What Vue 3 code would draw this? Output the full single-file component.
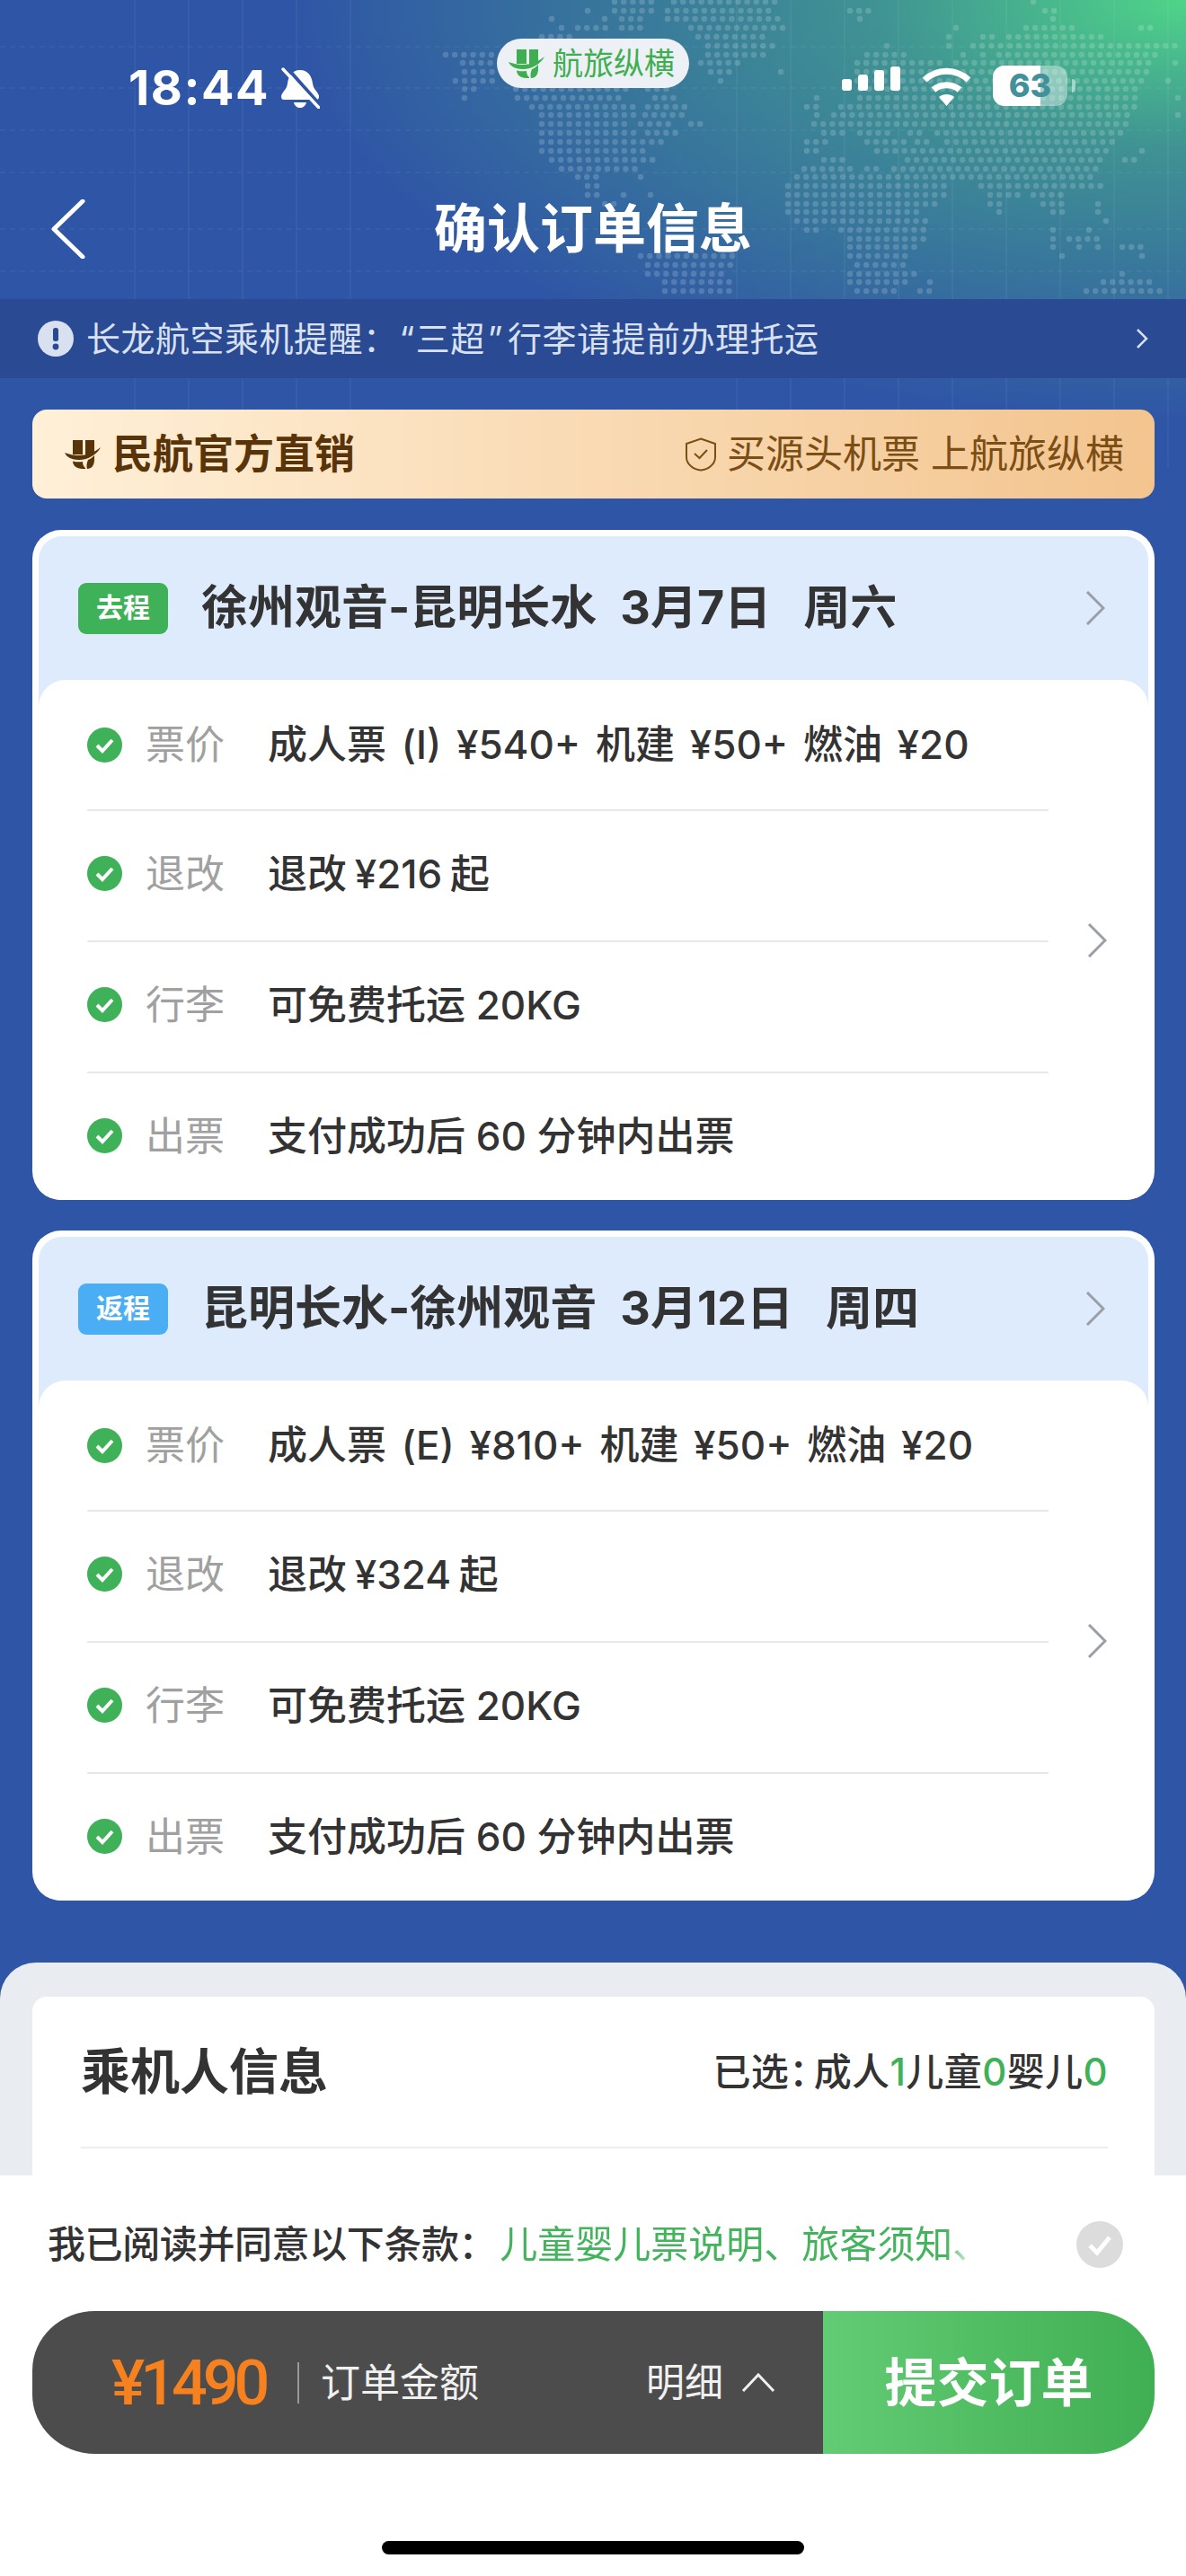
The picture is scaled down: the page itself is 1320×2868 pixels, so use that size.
<script setup>
import { computed } from 'vue'

// logo mark, used in the status pill and in the banner
const markD = 'M9 0h11v16H9zM23 0h10v13l-10 6zM0 14C6 16 9 17 16 17C26 17 34 13 40 8C36 16 26 22 16 22C8 22 2 19 0 14zM9 23.5C13 24.5 17 24.5 20 24C20 27 21 29.5 23 31V32H20C13 32 9 28 9 23.5zM33 17V22C33 28 30 32 25 32C24 29 24.5 26 26 22C29 21 31 19 33 17z'

// continents of the header map: [y, x0, x1, x0, x1, ...]
const mapRows = [
  [2, 684, 732, 750, 871, 1150, 1150],
  [12, 654, 654, 684, 727, 743, 863, 946, 970, 1163, 1174],
  [21, 614, 614, 673, 673, 692, 716, 743, 874, 957, 957, 1172, 1182],
  [31, 625, 625, 643, 676, 692, 716, 769, 874, 1064, 1064, 1142, 1196, 1270, 1290],
  [41, 603, 636, 777, 853, 1056, 1056, 1094, 1105, 1123, 1228],
  [51, 788, 863, 987, 987, 1056, 1056, 1083, 1316],
  [61, 496, 550, 788, 853, 965, 1008, 1072, 1072, 1094, 1094, 1112, 1295],
  [70, 515, 550, 780, 823, 954, 1053, 1064, 1284, 1308, 1308],
  [80, 517, 550, 791, 812, 869, 869, 954, 1064, 1072, 1279],
  [90, 507, 550, 802, 802, 954, 1273, 1300, 1300],
  [99, 517, 531, 574, 697, 721, 748, 957, 1273],
  [109, 517, 517, 576, 697, 729, 756, 909, 909, 957, 1268, 1311, 1311],
  [119, 592, 708, 721, 764, 898, 909, 936, 1263],
  [128, 603, 708, 718, 764, 909, 909, 928, 1263, 1311, 1311],
  [138, 603, 697, 713, 753, 769, 783, 906, 1263],
  [148, 603, 708, 721, 756, 917, 938, 957, 989, 1013, 1032, 1043, 1255],
  [158, 603, 737, 898, 922, 965, 1008, 1021, 1037, 1054, 1244],
  [168, 603, 716, 898, 912, 976, 1233, 1271, 1271],
  [178, 614, 727, 917, 938, 1010, 1230, 1252, 1263],
  [188, 625, 708, 895, 952, 965, 981, 995, 1222],
  [197, 643, 668, 713, 713, 887, 1220],
  [207, 654, 668, 877, 1059, 1092, 1225],
  [217, 654, 668, 694, 694, 724, 724, 877, 1059, 1102, 1137, 1150, 1185],
  [227, 673, 689, 877, 1048, 1102, 1118, 1161, 1185, 1222, 1222],
  [236, 877, 1029, 1112, 1112, 1172, 1185, 1222, 1222],
  [246, 887, 1040, 1231, 1231],
  [256, 898, 909, 936, 1037, 1172, 1172, 1212, 1212],
  [266, 946, 1029, 1172, 1172, 1190, 1222],
  [275, 946, 1019, 1172, 1172, 1201, 1201, 1222, 1222, 1249, 1273],
  [285, 713, 823, 946, 1011, 1182, 1182, 1271, 1281],
  [295, 721, 823, 954, 1011],
  [305, 721, 812, 946, 1019, 1249, 1249],
  [314, 740, 812, 946, 1011, 1035, 1035, 1228, 1284],
  [324, 740, 812, 954, 1000, 1024, 1037, 1209, 1293]
]

const dotPath = computed(() => {
  let d = ''
  for (const [y, ...spans] of mapRows) {
    for (let i = 0; i < spans.length; i += 2) {
      for (let x = spans[i]; x <= spans[i + 1]; x += 10.2) {
        d += `M${x} ${y}h.01`
      }
    }
  }
  return d
})

const gridX = [150, 210, 270, 330, 390, 820, 880, 940, 1000, 1060, 1120, 1180, 1240, 1300]
const gridY = [52, 98, 145, 192, 255, 302]

const trips = [
  {
    tag: '去程',
    tagClass: 'tag-go',
    route: '徐州观音-昆明长水',
    date: '3月7日',
    week: '周六',
    rows: [
      { label: '票价', value: '成人票 (I) ¥540+ 机建 ¥50+ 燃油 ¥20', gap: 5 },
      { label: '退改', value: '退改 ¥216 起', gap: -3 },
      { label: '行李', value: '可免费托运 20KG', gap: 0 },
      { label: '出票', value: '支付成功后 60 分钟内出票', gap: 0 }
    ]
  },
  {
    tag: '返程',
    tagClass: 'tag-back',
    route: '昆明长水-徐州观音',
    date: '3月12日',
    week: '周四',
    rows: [
      { label: '票价', value: '成人票 (E) ¥810+ 机建 ¥50+ 燃油 ¥20', gap: 5 },
      { label: '退改', value: '退改 ¥324 起', gap: -3 },
      { label: '行李', value: '可免费托运 20KG', gap: 0 },
      { label: '出票', value: '支付成功后 60 分钟内出票', gap: 0 }
    ]
  }
]
</script>

<template>
  <div class="page">
    <!-- header artwork -->
    <svg class="hero-art" width="1320" height="520" viewBox="0 0 1320 520">
      <g stroke="#fff" stroke-opacity="0.045" stroke-width="2">
        <line v-for="x in gridX" :key="'x' + x" :x1="x" y1="0" :x2="x" y2="520" />
        <line v-for="y in gridY" :key="'y' + y" x1="0" :y1="y" x2="1320" :y2="y" stroke-dasharray="6 5" />
      </g>
      <path :d="dotPath" stroke="#fff" stroke-opacity="0.17" stroke-width="6.5" stroke-linecap="round" fill="none" />
    </svg>

    <div class="content">
      <div class="status">
        <div class="status-left">
          <span class="time">18:44</span>
          <svg class="bell" width="44" height="46" viewBox="0 0 44 46">
            <path d="M22 3c9 0 13 7 14 15c1 7 6 9 7 14c0 3-1 4-3 4H4c-2 0-3-1-3-4c1-5 6-7 7-14C9 10 13 3 22 3zM15 39h14c-1 4-4 6-7 6s-6-2-7-6z" fill="#fff" />
            <path d="M7 0L46 44" stroke="#2f55a6" stroke-width="4" />
            <path d="M3 2L43 45" stroke="#fff" stroke-width="3.5" stroke-linecap="round" />
          </svg>
        </div>
        <div class="app-pill">
          <svg width="40" height="32" viewBox="0 0 40 32"><path :d="markD" fill="#3fae50" /></svg>
          <span>航旅纵横</span>
        </div>
        <div class="status-right">
          <div class="signal">
            <i style="height: 13px"></i>
            <i style="height: 18px"></i>
            <i style="height: 23px"></i>
            <i style="height: 27px"></i>
          </div>
          <svg class="wifi" width="57" height="44" viewBox="0 0 57 44">
            <path d="M4 15C18 2 39 2 53 15M14 26C22 19 35 19 43 26" stroke="#fff" stroke-width="7" fill="none" />
            <path d="M20 34L28.5 44L37 34C32 30 25 30 20 34z" fill="#fff" />
          </svg>
          <div class="battery">
            <span class="battery-level"></span>
            <span class="battery-num">63</span>
          </div>
          <span class="battery-tip"></span>
        </div>
      </div>

      <div class="nav">
        <svg class="back" width="40" height="66" viewBox="0 0 40 66">
          <path d="M36 2L4 33L36 64" stroke="#fff" stroke-width="5" fill="none" stroke-linecap="round" stroke-linejoin="round" />
        </svg>
        <h1>确认订单信息</h1>
      </div>

      <div class="notice">
        <svg width="40" height="40" viewBox="0 0 40 40">
          <circle cx="20" cy="20" r="20" fill="#d9e1f0" />
          <rect x="17" y="8" width="6" height="15" rx="2.5" fill="#2a4a94" />
          <circle cx="20" cy="29" r="3.4" fill="#2a4a94" />
        </svg>
        <span class="notice-text">长龙航空乘机提醒：<span class="quote-l">“</span>三超<span class="quote-r">”</span>行李请提前办理托运</span>
        <svg class="notice-arrow" width="16" height="22" viewBox="0 0 16 22">
          <path d="M3 1L13 11L3 21" stroke="#d9e1f0" stroke-width="2.5" fill="none" />
        </svg>
      </div>

      <div class="banner">
        <div class="banner-left">
          <svg width="40" height="32" viewBox="0 0 40 32"><path :d="markD" fill="#5a3409" /></svg>
          <span>民航官方直销</span>
        </div>
        <div class="banner-right">
          <svg width="36" height="38" viewBox="0 0 36 38">
            <path d="M18 1.5L34 7V22C34 30 26 36 18 36.5C10 36 2 30 2 22V7z" fill="none" stroke="#7a4e14" stroke-width="2" />
            <path d="M11 18L16.5 23L25 14" fill="none" stroke="#7a4e14" stroke-width="2" />
          </svg>
          <span>买源头机票 上航旅纵横</span>
        </div>
      </div>

      <section v-for="trip in trips" :key="trip.tag" class="trip">
        <div class="trip-head">
          <span class="tag" :class="trip.tagClass">{{ trip.tag }}</span>
          <span class="trip-title">{{ trip.route }}<span class="trip-date">{{ trip.date }}</span><span class="trip-week">{{ trip.week }}</span></span>
          <svg class="chev" width="22" height="38" viewBox="0 0 22 38">
            <path d="M2 1L20 19L2 37" stroke="#9a9ea6" stroke-width="3" fill="none" />
          </svg>
        </div>
        <div class="trip-body">
          <div class="trip-rows">
            <div v-for="row in trip.rows" :key="row.label" class="row">
              <svg class="ok" width="39" height="39" viewBox="0 0 39 39">
                <circle cx="19.5" cy="19.5" r="19.5" fill="#3fb158" />
                <path d="M11 20L17 26L28 14" stroke="#fff" stroke-width="4" fill="none" />
              </svg>
              <span class="row-label">{{ row.label }}</span>
              <span class="row-value" :style="{ wordSpacing: row.gap + 'px' }">{{ row.value }}</span>
            </div>
          </div>
          <svg class="chev" width="22" height="38" viewBox="0 0 22 38">
            <path d="M2 1L20 19L2 37" stroke="#9a9ea6" stroke-width="3" fill="none" />
          </svg>
        </div>
      </section>

      <div class="sheet">
        <div class="pax-card">
          <div class="pax-head">
            <h2>乘机人信息</h2>
            <span class="pax-count">已选<span class="half">：</span>成人<b>1</b>儿童<b>0</b>婴儿<b>0</b></span>
          </div>
        </div>
      </div>
    </div>

    <!-- fixed bottom bar, covers the rest of the page -->
    <div class="footer">
      <div class="agree">
        <span class="agree-text">我已阅读并同意以下条款：</span>
        <span class="agree-links">儿童婴儿票说明、旅客须知、</span>
        <svg width="52" height="52" viewBox="0 0 52 52">
          <circle cx="26" cy="26" r="26" fill="#dcdcdc" />
          <path d="M15 27L23 35L37 18" stroke="#fff" stroke-width="5" fill="none" />
        </svg>
      </div>
      <div class="pay">
        <div class="pay-left">
          <span class="price">¥1490</span>
          <span class="pay-sep"></span>
          <span class="pay-label">订单金额</span>
          <span class="pay-detail">明细</span>
          <svg width="38" height="22" viewBox="0 0 38 22">
            <path d="M2 20L19 2L36 20" stroke="#f0f0f0" stroke-width="3" fill="none" />
          </svg>
        </div>
        <div class="pay-btn">提交订单</div>
      </div>
      <div class="home-bar"></div>
    </div>
  </div>
</template>

<style>
body {
  margin: 0;
}
</style>

<style scoped>
.page {
  position: relative;
  width: 1320px;
  height: 2868px;
  overflow: hidden;
  background:
    radial-gradient(ellipse 1000px 470px at 100% 0, #4fd488 0%, rgba(70, 170, 140, 0.72) 35%, rgba(47, 85, 166, 0) 100%),
    #2f55a6;
  font-family: Inter, "Noto Sans CJK SC", sans-serif;
  color: #333;
}
.hero-art {
  position: absolute;
  left: 0;
  top: 0;
}
.content {
  position: relative;
}
.half {
  font-feature-settings: "halt";
  margin-right: 6px;
}

/* status bar */
.status {
  display: flex;
  height: 190px;
  box-sizing: border-box;
  padding-left: 143px;
}
.status-left {
  display: flex;
  align-items: center;
  gap: 12px;
  height: 50px;
  margin-top: 73px;
  width: 410px;
}
.time {
  font-size: 54px;
  font-weight: 700;
  letter-spacing: 1.5px;
  color: #fff;
  line-height: 50px;
}
.app-pill {
  display: flex;
  align-items: center;
  gap: 9px;
  width: 214px;
  height: 55px;
  margin-top: 43px;
  box-sizing: border-box;
  padding-left: 13px;
  border-radius: 28px;
  background: #edf1f5;
  color: #3fae50;
  font-size: 34px;
  line-height: 1;
}
.status-right {
  display: flex;
  align-items: flex-end;
  height: 45px;
  margin: 73px 0 0 170px;
}
.signal {
  display: flex;
  align-items: flex-end;
  gap: 7px;
  height: 28px;
  margin-bottom: 17px;
}
.signal i {
  display: block;
  width: 11px;
  border-radius: 3px;
  background: #fff;
}
.wifi {
  margin-left: 23px;
}
.battery {
  position: relative;
  width: 83px;
  height: 45px;
  margin-left: 23px;
  border-radius: 13px;
  background: rgba(255, 255, 255, 0.4);
  overflow: hidden;
}
.battery-level {
  position: absolute;
  left: 0;
  top: 0;
  bottom: 0;
  width: 53px;
  background: #fff;
}
.battery-num {
  position: absolute;
  left: 0;
  right: 0;
  top: 0;
  text-align: center;
  font-size: 36px;
  font-weight: 800;
  line-height: 45px;
  color: #41909c;
}
.battery-tip {
  width: 4px;
  height: 15px;
  margin: 0 0 15px 5px;
  border-radius: 0 4px 4px 0;
  background: rgba(255, 255, 255, 0.5);
}

/* nav */
.nav {
  position: relative;
  height: 143px;
}
.nav h1 {
  margin: 0;
  padding-top: 25px;
  text-align: center;
  font-size: 59px;
  font-weight: 700;
  line-height: 80px;
  color: #fff;
}
.back {
  position: absolute;
  left: 56px;
  top: 32px;
}

/* notice */
.notice {
  display: flex;
  align-items: center;
  height: 88px;
  box-sizing: border-box;
  padding-left: 42px;
  background: #2a4a94;
  color: #d9e1f0;
}
.notice-text {
  margin-left: 14px;
  font-size: 38px;
  letter-spacing: 0.5px;
  line-height: 1;
  white-space: nowrap;
}
.quote-l {
  margin: 0 1px 0 2px;
}
.quote-r {
  margin: 0 5px 0 3px;
}
.notice-arrow {
  margin-left: auto;
  margin-right: 41px;
}

/* banner */
.banner {
  display: flex;
  align-items: center;
  justify-content: space-between;
  height: 99px;
  margin: 35px 35px 0 36px;
  box-sizing: border-box;
  padding: 0 34px 0 36px;
  border-radius: 16px;
  background: linear-gradient(90deg, #fff0d8, #f3c48e);
}
.banner-left {
  display: flex;
  align-items: center;
  gap: 13px;
  font-size: 45px;
  font-weight: 700;
  color: #5a3409;
  line-height: 1;
}
.banner-right {
  display: flex;
  align-items: center;
  gap: 11px;
  font-size: 43px;
  color: #7a4e14;
  line-height: 1;
}

/* trip cards */
.trip {
  height: 746px;
  margin: 35px 35px 0 36px;
  box-sizing: border-box;
  padding: 7px 7px 0;
  border-radius: 32px;
  background: #fff;
  overflow: hidden;
}
.trip + .trip {
  margin-top: 34px;
}
.trip-head {
  display: flex;
  align-items: center;
  height: 190px;
  box-sizing: border-box;
  padding: 0 48px 30px 44px;
  margin-bottom: -30px;
  border-radius: 26px 26px 0 0;
  background: #deebfd;
}
.tag {
  width: 100px;
  height: 57px;
  border-radius: 9px;
  text-align: center;
  font-size: 30px;
  font-weight: 700;
  line-height: 55px;
  color: #fff;
}
.tag-go {
  background: #3fb158;
}
.tag-back {
  background: #4aaef5;
}
.trip-title {
  margin-left: 37px;
  font-size: 52px;
  font-weight: 700;
  line-height: 1;
  white-space: nowrap;
}
.trip-date {
  margin-left: 26px;
}
.trip-week {
  margin-left: 36px;
}
.trip-head .chev {
  margin-left: auto;
}
.trip-body {
  position: relative;
  display: flex;
  align-items: center;
  height: 579px;
  border-radius: 30px 30px 0 0;
  background: #fff;
}
.trip-rows {
  align-self: flex-start;
  width: 1070px;
  margin-left: 54px;
}
.trip-body .chev {
  margin-left: 43px;
}
.row {
  display: flex;
  align-items: center;
  box-sizing: border-box;
  height: 146px;
  padding-bottom: 5px;
  border-top: 2px solid #e8e8e8;
}
.row:first-child {
  border-top: 0;
  height: 144px;
  padding-bottom: 0;
}
.row-label {
  width: 136px;
  margin-left: 26px;
  font-size: 44px;
  line-height: 1;
  color: #a0a0a0;
}
.row-value {
  font-size: 44px;
  font-weight: 500;
  line-height: 1;
  white-space: nowrap;
}

/* passenger sheet */
.sheet {
  margin-top: 69px;
  height: 300px;
  padding: 38px 35px 0 36px;
  border-radius: 40px 40px 0 0;
  background: #e9ecf0;
}
.pax-card {
  height: 260px;
  padding: 0 52px 0 54px;
  border-radius: 16px;
  background: #fff;
}
.pax-head {
  display: flex;
  align-items: center;
  justify-content: space-between;
  height: 167px;
  border-bottom: 2px solid #eee;
}
.pax-head h2 {
  margin: 0;
  font-size: 55px;
  font-weight: 700;
  line-height: 1;
}
.pax-count {
  font-size: 42px;
  font-weight: 500;
  letter-spacing: 0.4px;
  line-height: 1;
  white-space: nowrap;
}
.pax-count b {
  font-weight: 500;
  color: #3fb158;
}

/* footer */
.footer {
  position: absolute;
  left: 0;
  right: 0;
  bottom: 0;
  height: 446px;
  background: #fff;
}
.agree {
  display: flex;
  align-items: center;
  height: 52px;
  padding: 51px 0 0 53px;
  font-size: 42px;
  line-height: 1;
}
.agree-text {
  font-weight: 500;
  letter-spacing: -0.4px;
}
.agree-links {
  flex: none;
  width: 546px;
  margin-left: 4px;
  white-space: nowrap;
  color: #43b35c;
  -webkit-mask-image: linear-gradient(90deg, #000 91%, transparent 97%);
  mask-image: linear-gradient(90deg, #000 91%, transparent 97%);
}
.agree svg {
  margin-left: 96px;
}
.pay {
  display: flex;
  height: 159px;
  margin: 48px 35px 0 36px;
  border-radius: 70px / 66px;
  overflow: hidden;
}
.pay-left {
  display: flex;
  align-items: center;
  width: 880px;
  box-sizing: border-box;
  padding-left: 88px;
  background: #4c4c4c;
  color: #f0f0f0;
}
.price {
  width: 168px;
  font-family: Roboto, sans-serif;
  font-size: 70px;
  font-weight: 500;
  letter-spacing: -5px;
  color: #f7811e;
  line-height: 1;
}
.pay-sep {
  width: 2px;
  height: 46px;
  margin-left: 39px;
  background: #999;
}
.pay-label {
  margin-left: 24px;
  font-size: 44px;
  line-height: 1;
}
.pay-detail {
  margin-left: 186px;
  font-size: 43px;
  line-height: 1;
}
.pay-left svg {
  margin-left: 20px;
}
.pay-btn {
  flex: 1;
  display: flex;
  align-items: center;
  justify-content: center;
  background: linear-gradient(90deg, #62cc74, #40ae52);
  color: #fff;
  font-size: 58px;
  font-weight: 700;
  line-height: 1;
}
.home-bar {
  width: 470px;
  height: 15px;
  margin: 97px 0 0 425px;
  border-radius: 8px;
  background: #000;
}
</style>
